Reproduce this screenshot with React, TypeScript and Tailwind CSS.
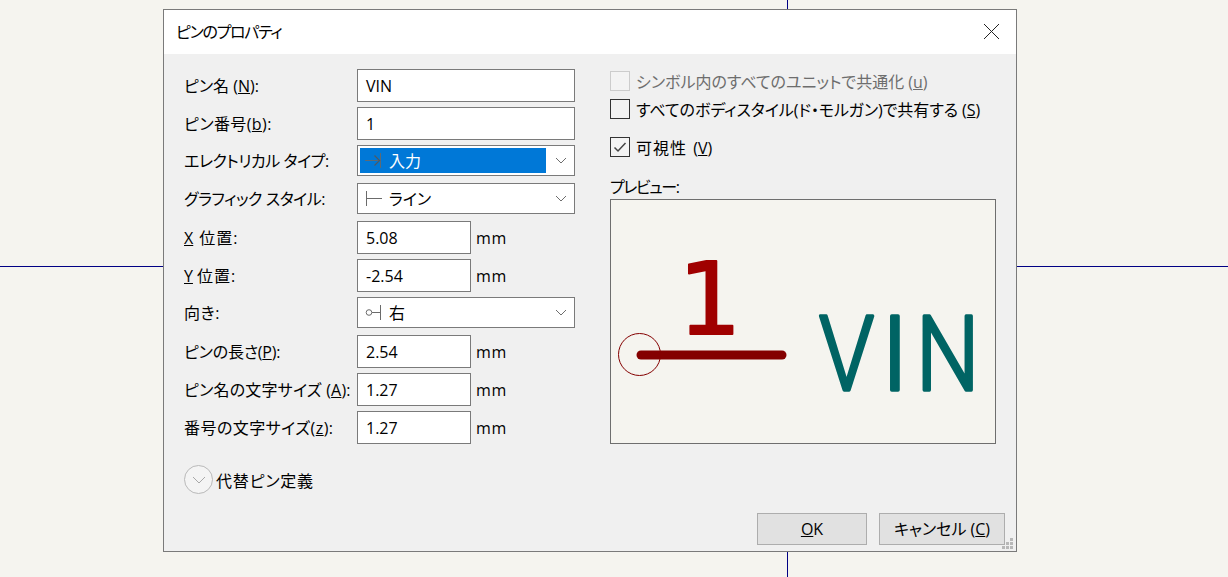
const uiFont =
  "[font-family:'Open_Sans','Noto_Sans_CJK_JP',sans-serif] [font-feature-settings:'palt'] text-[16px] leading-[20px] text-black";

function Label({ children }: { children: React.ReactNode }) {
  return <div className="flex h-[33px] w-[173px] shrink-0 items-center whitespace-nowrap">{children}</div>;
}

function TextRow({ label, value, unit }: { label: React.ReactNode; value: string; unit?: boolean }) {
  return (
    <div className="flex h-[38px] items-start">
      <Label>{label}</Label>
      <div
        className={`flex h-[33px] items-center border border-[#7a7a7a] bg-white pl-2 ${unit ? "w-[114px]" : "w-[218px]"}`}
      >
        {value}
      </div>
      {unit && <div className="ml-[5px] flex h-[33px] items-center tracking-[0.6px]">mm</div>}
    </div>
  );
}

function Chevron() {
  return (
    <svg width="12" height="7" viewBox="0 0 12 7" className="shrink-0">
      <path d="M1 1 L6 6 L11 1" fill="none" stroke="#6d6d6d" strokeWidth="1" />
    </svg>
  );
}

function ComboRow({
  label,
  icon,
  text,
  selected,
}: {
  label: React.ReactNode;
  icon: React.ReactNode;
  text: string;
  selected?: boolean;
}) {
  return (
    <div className="flex h-[38px] items-start">
      <Label>
        <span className="relative -top-px">{label}</span>
      </Label>
      <div className="flex h-[31px] w-[218px] items-center border border-[#7a7a7a] bg-white pl-[2px] pr-[7px]">
        <div
          className={`flex h-[25px] w-[186px] items-center gap-[7px] pl-[5px] ${selected ? "bg-[#0078d7] text-white" : ""}`}
        >
          {icon}
          <span>{text}</span>
        </div>
        <div className="flex flex-1 justify-end">
          <Chevron />
        </div>
      </div>
    </div>
  );
}

function Check({ checked, disabled, children }: { checked?: boolean; disabled?: boolean; children: React.ReactNode }) {
  return (
    <div className={`flex h-5 items-center gap-[6px] whitespace-nowrap ${disabled ? "text-[#6d6d6d]" : ""}`}>
      <div
        className={`flex h-5 w-5 shrink-0 items-center justify-center border ${disabled ? "border-[#cccccc]" : "border-[#333333]"} bg-[#f3f3f3]`}
      >
        {checked && (
          <svg width="14" height="12" viewBox="0 0 14 12">
            <path d="M1.5 6.5 L5 10 L12.5 2" fill="none" stroke="#444444" strokeWidth="1.5" />
          </svg>
        )}
      </div>
      <span className="relative top-px">{children}</span>
    </div>
  );
}

function Grip() {
  const dots = [
    [8, 0],
    [4, 4],
    [8, 4],
    [0, 8],
    [4, 8],
    [8, 8],
  ];
  return (
    <svg width="11" height="11" viewBox="0 0 11 11" className="absolute bottom-[2px] right-[3px]">
      {dots.map(([x, y]) => (
        <rect key={`${x}-${y}`} x={x} y={y} width="3" height="3" fill="#b8b8b8" />
      ))}
    </svg>
  );
}

export default function App() {
  return (
    <div className={`relative h-[577px] w-[1228px] overflow-hidden bg-[#f5f4ef] pl-[163px] pt-[9px] ${uiFont}`}>
      {/* schematic crosshair behind the dialog */}
      <div className="absolute left-[787px] top-0 h-full w-px bg-[#000084]" />
      <div className="absolute left-0 top-[266px] h-px w-full bg-[#000084]" />

      <div className="relative flex h-[543px] w-[854px] flex-col border border-[#7a7a7a] bg-[#f0f0f0]">
        <div className="flex h-[44px] shrink-0 items-center justify-between bg-white pl-[12px] pr-[16px]">
          <span className="tracking-[-1.3px]">ピンのプロパティ</span>
          <svg width="17" height="17" viewBox="0 0 17 17" className="relative -top-px">
            <path d="M1 1 L16 16 M16 1 L1 16" stroke="#222222" strokeWidth="1" fill="none" />
          </svg>
        </div>

        <div className="flex flex-1 pl-[20px] pt-[15px]">
          <div className="w-[426px] shrink-0">
            <TextRow label={<>ピン名 (<u>N</u>):</>} value="VIN" />
            <TextRow label={<span className="tracking-[0.4px]">ピン番号(<u>b</u>):</span>} value="1" />
            <ComboRow
              label={<span className="tracking-[-0.45px]">エレクトリカル タイプ:</span>}
              text="入力"
              selected
              icon={
                <svg width="17" height="17" viewBox="0 0 17 17">
                  <path d="M0 8.5 H15 M15.5 1 V16" fill="none" stroke="#5f6a72" strokeWidth="1" />
                  <path d="M9.5 3.5 L14.5 8.5 L9.5 13.5" fill="none" stroke="#4f5a62" strokeWidth="1.2" />
                </svg>
              }
            />
            <ComboRow
              label={<span className="tracking-[-0.45px]">グラフィック スタイル:</span>}
              text="ライン"
              icon={
                <svg width="17" height="17" viewBox="0 0 17 17">
                  <path d="M1.5 1 V16 M1.5 8.5 H17" fill="none" stroke="#6b6b6b" strokeWidth="1" />
                </svg>
              }
            />
            <TextRow label={<><u>X</u><span className="ml-[6px] tracking-[1px]">位置:</span></>} value="5.08" unit />
            <TextRow label={<><u>Y</u><span className="ml-[4px] tracking-[1px]">位置:</span></>} value="-2.54" unit />
            <ComboRow
              label={<span className="tracking-[0.6px]">向き:</span>}
              text="右"
              icon={
                <svg width="17" height="17" viewBox="0 0 17 17">
                  <circle cx="4" cy="8.5" r="2.8" fill="none" stroke="#6b6b6b" strokeWidth="1" />
                  <path d="M7 8.5 H15.5 M15.5 1 V16" fill="none" stroke="#6b6b6b" strokeWidth="1" />
                </svg>
              }
            />
            <TextRow label={<span className="tracking-[-0.2px]">ピンの長さ(<u>P</u>):</span>} value="2.54" unit />
            <TextRow label={<span className="tracking-[0.2px]">ピン名の文字サイズ (<u>A</u>):</span>} value="1.27" unit />
            <TextRow label={<span className="tracking-[0.45px]">番号の文字サイズ(<u>z</u>):</span>} value="1.27" unit />

            <div className="mt-[16px] flex items-center gap-[3px]">
              <div className="flex h-[29px] w-[29px] items-center justify-center rounded-full border border-[#b9b9b9] bg-[#f4f4f4]">
                <svg width="14" height="8" viewBox="0 0 14 8">
                  <path d="M1 1 L7 7 L13 1" fill="none" stroke="#a8a8a8" strokeWidth="1" />
                </svg>
              </div>
              <span className="relative top-px tracking-[0.8px]">代替ピン定義</span>
            </div>
          </div>

          <div className="flex flex-col pt-[2px]">
            <Check disabled>
              シンボル内のすべてのユニットで共通化 (<u>u</u>)
            </Check>
            <div className="mt-2">
              <Check>
                <span className="tracking-[-0.05px]">
                  すべてのボディスタイル(ド・モルガン)で共有する (<u>S</u>)
                </span>
              </Check>
            </div>
            <div className="mt-[18px]">
              <Check checked>
                <span className="mr-[2px] tracking-[1px]">可視性</span> (<u>V</u>)
              </Check>
            </div>
            <div className="mt-[20px] tracking-[-1.4px]">プレビュー:</div>
            <div className="mt-[2px] h-[245px] w-[386px] border border-[#6e6e6e] bg-[#f5f4ef]">
              <svg width="384" height="243" viewBox="0 0 384 243" className="block">
                <text
                  x="67"
                  y="134"
                  fontSize="100"
                  fill="#a00000"
                  stroke="#a00000"
                  strokeWidth="2"
                  strokeLinejoin="round"
                  fontFamily="'DejaVu Sans', sans-serif"
                >
                  1
                </text>
                {/* stroke font in the preview: letters are spaced and narrowed one by one */}
                <g
                  fontSize="104"
                  fontWeight="300"
                  fill="#006464"
                  stroke="#006464"
                  strokeWidth="3.5"
                  strokeLinejoin="round"
                  fontFamily="Roboto, sans-serif"
                >
                  <text transform="translate(208 190) scale(0.86 1)">V</text>
                  <text x="270" y="190">
                    I
                  </text>
                  <text transform="translate(305 190) scale(0.86 1)">N</text>
                </g>
                <line x1="30" y1="155" x2="171" y2="155" stroke="#840000" strokeWidth="9" strokeLinecap="round" />
                <circle cx="28.5" cy="154.5" r="21" fill="none" stroke="#840000" strokeWidth="1" />
              </svg>
            </div>
          </div>
        </div>

        <div className="flex shrink-0 justify-end gap-3 pb-[6px] pr-[11px]">
          <div className="flex h-[32px] w-[110px] items-center justify-center border border-[#adadad] bg-[#e1e1e1]">
            <span>
              <u>O</u>K
            </span>
          </div>
          <div className="flex h-[32px] w-[126px] items-center justify-center border border-[#adadad] bg-[#e1e1e1]">
            <span>
              キャンセル (<u>C</u>)
            </span>
          </div>
        </div>
        <Grip />
      </div>
    </div>
  );
}
